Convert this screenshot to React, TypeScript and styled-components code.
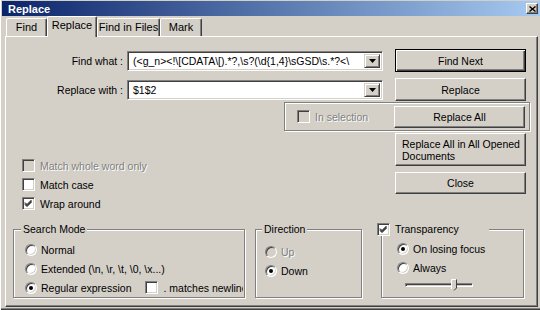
import React from "react";
import styled, { createGlobalStyle, css } from "styled-components";

const Global = createGlobalStyle`
  html, body { margin: 0; padding: 0; background: #D4D0C8; }
  body { font-family: "Liberation Sans", Arial, sans-serif; font-size: 10.5px; color: #000; }
  * { box-sizing: border-box; }
`;

const FACE = "#D4D0C8";

const Window = styled.div`
  width: 540px;
  height: 310px;
  overflow: hidden;
  background: ${FACE};
  display: flex;
  flex-direction: column;
  padding: 1px 0 3px 2px;
  box-shadow: inset 1px 0 #fff, inset 0 -1px #404040, inset 0 -2px #808080;
`;

const TitleBar = styled.div`
  height: 15px;
  flex: none;
  display: flex;
  align-items: center;
  justify-content: space-between;
  padding: 0 2px 0 6px;
  background: linear-gradient(to right, #0a246a, #a6caf0);
  color: #fff;
  font-weight: bold;
  font-size: 11px;
`;

const CloseBtn = styled.div`
  width: 12px;
  height: 11px;
  display: flex;
  align-items: center;
  justify-content: center;
  background: ${FACE};
  border: 1px solid;
  border-color: #fff #404040 #404040 #fff;
  box-shadow: inset -1px -1px #808080;
`;

const TabStrip = styled.div`
  height: 20px;
  flex: none;
  display: flex;
  align-items: flex-end;
  padding-left: 4px;
  position: relative;
  z-index: 1;
`;

const Tab = styled.div<{ $active?: boolean; $w: number }>`
  width: ${(p) => p.$w}px;
  height: ${(p) => (p.$active ? 21 : 18)}px;
  margin-bottom: ${(p) => (p.$active ? -1 : 0)}px;
  border: 1px solid;
  border-bottom: none;
  border-color: #fff #404040 transparent #fff;
  box-shadow: inset -1px 0 #808080;
  border-radius: 2px 2px 0 0;
  background: ${FACE};
  text-align: center;
  font-size: 11px;
  line-height: 16px;
  white-space: nowrap;
`;

const Panel = styled.div`
  flex: 1;
  margin: 0 2px 0 3px;
  border: 1px solid;
  border-color: #fff #404040 #404040 #fff;
  box-shadow: inset -1px -1px #808080;
  display: flex;
  flex-direction: column;
  padding-top: 12px;
`;

const FieldRow = styled.div<{ $top?: number }>`
  display: flex;
  align-items: center;
  height: 23px;
  margin-top: ${(p) => p.$top ?? 0}px;
`;

const Label = styled.div`
  width: 117px;
  margin-right: 4px;
  text-align: right;
  white-space: nowrap;
`;

const Combo = styled.div`
  width: 256px;
  height: 20px;
  display: flex;
  background: #fff;
  border: 1px solid;
  border-color: #808080 #fff #fff #808080;
  box-shadow: inset 1px 1px #404040, inset -1px -1px ${FACE};
  padding: 2px;
`;

const ComboText = styled.div`
  flex: 1;
  overflow: hidden;
  white-space: nowrap;
  padding-left: 3px;
  line-height: 14px;
`;

const DropBtn = styled.div`
  width: 16px;
  height: 14px;
  flex: none;
  display: flex;
  align-items: center;
  justify-content: center;
  background: ${FACE};
  border: 1px solid;
  border-color: ${FACE} #404040 #404040 ${FACE};
  box-shadow: inset 1px 1px #fff, inset -1px -1px #808080;
`;

const raised = css`
  border: 1px solid;
  border-color: #fff #404040 #404040 #fff;
  box-shadow: inset -1px -1px #808080;
`;

const Button = styled.div<{ $h?: number; $default?: boolean; $left?: boolean }>`
  width: 131px;
  height: ${(p) => p.$h ?? 23}px;
  flex: none;
  background: ${FACE};
  display: flex;
  align-items: center;
  justify-content: ${(p) => (p.$left ? "flex-start" : "center")};
  padding: ${(p) => (p.$left ? "0 4px 0 6px" : "0")};
  font-size: 10.5px;
  line-height: 12px;
  white-space: nowrap;
  ${(p) =>
    p.$default
      ? css`
          border: 1px solid #000;
          box-shadow: inset 1px 1px #fff, inset -1px -1px #404040, inset -2px -2px #808080;
        `
      : raised}
`;

const SideButton = styled(Button)`
  margin-left: 12px;
`;

const etched = css`
  border: 1px solid #808080;
  box-shadow: inset 1px 1px #fff, 1px 1px #fff;
`;

const SelectionBox = styled.div`
  ${etched};
  margin: 1px 0 0 278px;
  width: 246px;
  height: 29px;
  display: flex;
  align-items: flex-start;
  justify-content: space-between;
  padding: 3px 4px 0 12px;
`;

const SelectionCheck = styled.div`
  margin-top: 4px;
`;

const MiddleRow = styled.div`
  display: flex;
  margin-top: 2px;
`;

const OptionsCol = styled.div`
  width: 389px;
  padding: 26px 0 0 16px;
  display: flex;
  flex-direction: column;
  gap: 6px;
`;

const ButtonsCol = styled.div`
  display: flex;
  flex-direction: column;
  gap: 6px;
`;

const Control = styled.label<{ $disabled?: boolean }>`
  display: flex;
  align-items: center;
  height: 13px;
  white-space: nowrap;
  ${(p) =>
    p.$disabled &&
    css`
      color: #808080;
      text-shadow: 1px 1px #fff;
    `}
`;

const Box = styled.span<{ $disabled?: boolean }>`
  width: 13px;
  height: 13px;
  flex: none;
  display: inline-flex;
  margin-right: 5px;
  background: ${(p) => (p.$disabled ? FACE : "#fff")};
  border: 1px solid;
  border-color: #808080 #fff #fff #808080;
  box-shadow: inset 1px 1px #404040, inset -1px -1px ${FACE};
`;

const Radio = styled.span<{ $disabled?: boolean }>`
  width: 12px;
  height: 12px;
  flex: none;
  display: inline-flex;
  align-items: center;
  justify-content: center;
  margin-right: 4px;
  border-radius: 50%;
  background: ${(p) => (p.$disabled ? FACE : "#fff")};
  border: 1px solid;
  border-color: #808080 #fff #fff #808080;
  box-shadow: inset 1px 1px #404040, inset -1px -1px ${FACE};
`;

const Dot = styled.span`
  width: 4px;
  height: 4px;
  border-radius: 50%;
  background: #000;
`;

const GroupRow = styled.div`
  display: flex;
  align-items: flex-start;
  margin: 19px 0 0 7px;
`;

const Group = styled.div<{ $w: number; $ml?: number; $pl: number }>`
  ${etched};
  width: ${(p) => p.$w}px;
  height: 69px;
  margin-left: ${(p) => p.$ml ?? 0}px;
  padding-left: ${(p) => p.$pl}px;
  display: flex;
  flex-direction: column;
`;

const GroupTitle = styled.div<{ $ml: number; $w?: number }>`
  margin: -7px 0 0 ${(p) => p.$ml}px;
  padding: 0 2px;
  background: ${FACE};
  line-height: 13px;
  height: 13px;
  width: ${(p) => (p.$w ? `${p.$w}px` : "fit-content")};
  display: flex;
`;

const RadioList = styled.div<{ $top: number }>`
  display: flex;
  flex-direction: column;
  gap: 6px;
  margin-top: ${(p) => p.$top}px;
`;

const InlineRow = styled.div`
  display: flex;
  align-items: center;
`;

const ClipCheck = styled.div`
  width: 98px;
  margin-left: 14px;
  overflow: hidden;
`;

const SliderWrap = styled.div`
  position: relative;
  width: 68px;
  height: 12px;
  margin: 5px 0 0 8px;
  display: flex;
  align-items: center;
`;

const Track = styled.div`
  width: 100%;
  height: 4px;
  border: 1px solid;
  border-color: #808080 #fff #fff #808080;
  box-shadow: inset 1px 1px #404040;
`;

const Thumb = styled.svg`
  position: absolute;
  top: 0;
`;

const Check = () => (
  <svg width="11" height="11" viewBox="0 0 11 11">
    <path d="M2 4.5 L4 6.5 L8.5 2 M2 5.5 L4 7.5 L8.5 3 M2 6.5 L4 8.5 L8.5 4" stroke="#000" strokeWidth="1" fill="none" />
  </svg>
);

const CheckBox = ({ label, checked, disabled }: { label: React.ReactNode; checked?: boolean; disabled?: boolean }) => (
  <Control $disabled={disabled}>
    <Box $disabled={disabled}>{checked && <Check />}</Box>
    {label}
  </Control>
);

const RadioBtn = ({ label, checked, disabled }: { label: string; checked?: boolean; disabled?: boolean }) => (
  <Control $disabled={disabled}>
    <Radio $disabled={disabled}>{checked && <Dot />}</Radio>
    {label}
  </Control>
);

const Arrow = () => (
  <svg width="7" height="4" viewBox="0 0 7 4">
    <path d="M0 0 H7 L3.5 4 Z" fill="#000" />
  </svg>
);

const FIND_TEXT = "(<g_n><!\\[CDATA\\[).*?,\\s?(\\d{1,4}\\sGSD\\s.*?<\\";
const sliderValue = 68;

export default function App() {
  return (
    <>
      <Global />
      <Window>
        <TitleBar>
          <span>Replace</span>
          <CloseBtn>
            <svg width="7" height="6" viewBox="0 0 7 6">
              <path d="M0.5 0.5 L6.5 5.5 M6.5 0.5 L0.5 5.5" stroke="#000" strokeWidth="1.4" />
            </svg>
          </CloseBtn>
        </TitleBar>
        <TabStrip>
          <Tab $w={41}>Find</Tab>
          <Tab $w={50} $active>Replace</Tab>
          <Tab $w={63}>Find in Files</Tab>
          <Tab $w={42}>Mark</Tab>
        </TabStrip>
        <Panel>
          <FieldRow>
            <Label>Find what :</Label>
            <Combo>
              <ComboText>{FIND_TEXT}</ComboText>
              <DropBtn><Arrow /></DropBtn>
            </Combo>
            <SideButton $default>Find Next</SideButton>
          </FieldRow>
          <FieldRow $top={6}>
            <Label>Replace with :</Label>
            <Combo>
              <ComboText>$1$2</ComboText>
              <DropBtn><Arrow /></DropBtn>
            </Combo>
            <SideButton>Replace</SideButton>
          </FieldRow>
          <SelectionBox>
            <SelectionCheck>
              <CheckBox label="In selection" disabled />
            </SelectionCheck>
            <Button $h={22}>Replace All</Button>
          </SelectionBox>
          <MiddleRow>
            <OptionsCol>
              <CheckBox label="Match whole word only" disabled />
              <CheckBox label="Match case" />
              <CheckBox label="Wrap around" checked />
            </OptionsCol>
            <ButtonsCol>
              <Button $h={33} $left>
                Replace All in All Opened
                <br />
                Documents
              </Button>
              <Button $h={22}>Close</Button>
            </ButtonsCol>
          </MiddleRow>
          <GroupRow>
            <Group $w={232} $pl={11}>
              <GroupTitle $ml={-4}>Search Mode</GroupTitle>
              <RadioList $top={7}>
                <RadioBtn label="Normal" />
                <RadioBtn label="Extended (\n, \r, \t, \0, \x...)" />
                <InlineRow>
                  <RadioBtn label="Regular expression" checked />
                  <ClipCheck>
                    <CheckBox label=". matches newline" />
                  </ClipCheck>
                </InlineRow>
              </RadioList>
            </Group>
            <Group $w={107} $ml={10} $pl={9}>
              <GroupTitle $ml={-3}>Direction</GroupTitle>
              <RadioList $top={9}>
                <RadioBtn label="Up" disabled />
                <RadioBtn label="Down" checked />
              </RadioList>
            </Group>
            <Group $w={143} $ml={19} $pl={15}>
              <GroupTitle $ml={-22} $w={114}>
                <CheckBox label="Transparency" checked />
              </GroupTitle>
              <RadioList $top={6}>
                <RadioBtn label="On losing focus" checked />
                <RadioBtn label="Always" />
              </RadioList>
              <SliderWrap>
                <Track />
                <Thumb width="6" height="12" viewBox="0 0 6 12" style={{ left: `${sliderValue}%` }}>
                  <path d="M0.5 0.5 H5.5 V9 L3 11.5 L0.5 9 Z" fill="#D4D0C8" />
                  <path d="M0.5 10 V0.5 H5" stroke="#fff" fill="none" />
                  <path d="M5.5 0.5 V9 L3 11.5" stroke="#404040" fill="none" />
                </Thumb>
              </SliderWrap>
            </Group>
          </GroupRow>
        </Panel>
      </Window>
    </>
  );
}
